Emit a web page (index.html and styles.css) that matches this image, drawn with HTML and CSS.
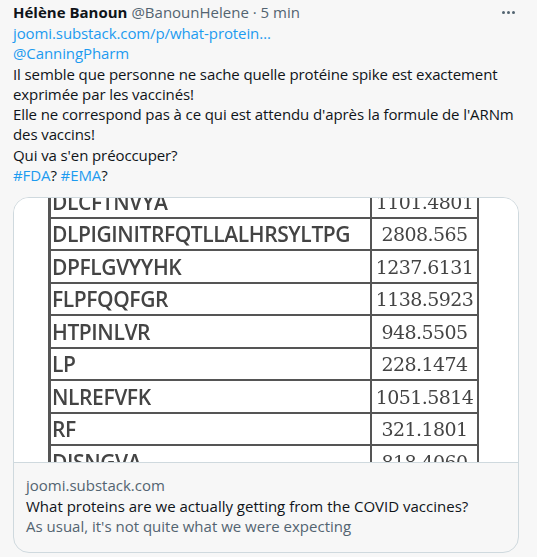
FILE: index.html
```html
<!DOCTYPE html>
<html lang="fr">
<head>
<meta charset="utf-8">
<link rel="stylesheet" href="styles.css">
</head>
<body>
<article class="tweet">
  <div class="head">
    <span class="name">Hélène Banoun</span>
    <span class="meta">@BanounHelene · 5 min</span>
    <span class="more"><i></i><i></i><i></i></span>
  </div>
  <div class="text">
    <a class="link">joomi.substack.com/p/what-protein…</a><br>
    <a class="link">@CanningPharm</a><br>
    Il semble que personne ne sache quelle protéine spike est exactement exprimée par les vaccinés!<br>
    Elle ne correspond pas à ce qui est attendu d'après la formule de l'ARNm des vaccins!<br>
    Qui va s'en préoccuper?<br>
    <a class="link">#FDA</a>? <a class="link">#EMA</a>?
  </div>
  <div class="card">
    <div class="media">
      <table class="pep">
        <tr><td class="seq">DLCFTNVYA</td><td class="mass">1101.4801</td></tr>
        <tr><td class="seq">DLPIGINITRFQTLLALHRSYLTPG</td><td class="mass">2808.565</td></tr>
        <tr><td class="seq">DPFLGVYYHK</td><td class="mass">1237.6131</td></tr>
        <tr><td class="seq">FLPFQQFGR</td><td class="mass">1138.5923</td></tr>
        <tr><td class="seq">HTPINLVR</td><td class="mass">948.5505</td></tr>
        <tr><td class="seq">LP</td><td class="mass">228.1474</td></tr>
        <tr><td class="seq">NLREFVFK</td><td class="mass">1051.5814</td></tr>
        <tr><td class="seq">RF</td><td class="mass">321.1801</td></tr>
        <tr><td class="seq">DISNGVA</td><td class="mass">818.4060</td></tr>
      </table>
    </div>
    <div class="info">
      <div class="domain">joomi.substack.com</div>
      <div class="title">What proteins are we actually getting from the COVID vaccines?</div>
      <div class="desc">As usual, it's not quite what we were expecting</div>
    </div>
  </div>
</article>
</body>
</html>
```

FILE: styles.css
```css
html, body {
  margin: 0;
  padding: 0;
  background: #f7f7f7;
}
body {
  font-family: "Open Sans", "Noto Sans", sans-serif;
  font-size: 15px;
  line-height: 20.3px;
  color: #0f1419;
}
.tweet {
  padding: 2px 19px 0 13px;
}
.head {
  display: flex;
  align-items: center;
  gap: 4px;
  height: 20px;
}
.name {
  font-weight: 700;
}
.meta {
  color: #536471;
}
.more {
  margin-left: auto;
  display: flex;
  gap: 2px;
  margin-right: 3px;
}
.more i {
  width: 3px;
  height: 3px;
  border-radius: 50%;
  background: #536471;
}
.text {
  margin-top: 1px;
  letter-spacing: -0.1px;
}
.link {
  color: #1d9bf0;
  text-decoration: none;
}
.card {
  margin-top: 12px;
  border: 1px solid #cfd9de;
  border-radius: 16px;
  overflow: hidden;
  width: 504px;
}
.media {
  background: #fff;
  height: 264px;
  overflow: hidden;
  border-bottom: 1px solid #cfd9de;
}
.pep {
  border-collapse: collapse;
  margin: -14px 0 0 34px;
  font-family: "Open Sans", sans-serif;
  font-weight: 600;
  color: #444;
  filter: blur(0.6px);
}
.pep td {
  border: 2px solid #555;
  height: 30.5px;
  padding: 0;
  font-size: 21px;
  line-height: 30px;
}
.seq {
  width: 318px;
  letter-spacing: -0.4px;
  padding-left: 1px !important;
  border-left-width: 3px !important;
}
.mass {
  width: 105px;
  text-align: center;
  font-family: "DejaVu Serif", serif;
  font-weight: 400;
  font-size: 19px !important;
  letter-spacing: -0.6px;
}
.info {
  padding: 12px 12px 16px;
}
.domain, .desc {
  color: #536471;
}
```
